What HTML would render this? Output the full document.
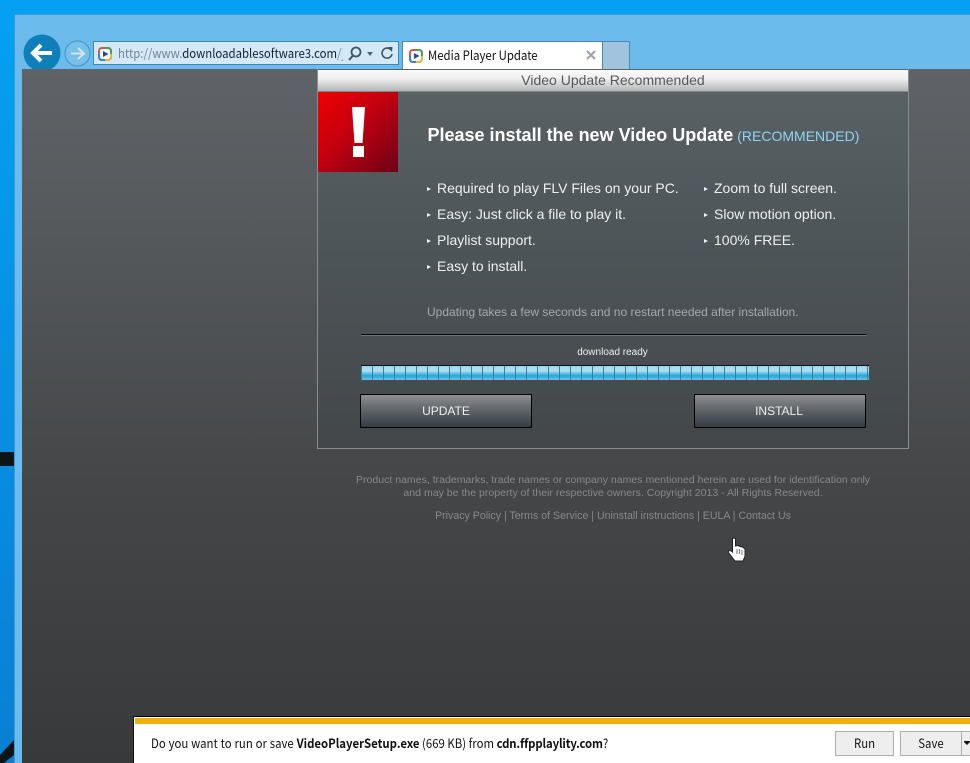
<!DOCTYPE html>
<html><head><meta charset="utf-8"><style>
html,body{margin:0;padding:0;width:970px;height:763px;overflow:hidden;background:#05a0f0}
body{position:relative;font-family:"Liberation Sans",sans-serif}
div{position:absolute;white-space:nowrap}
.ui{font-family:"Noto Sans CJK JP","Liberation Sans",sans-serif}
.sx{display:inline-block;transform:scaleX(.91);transform-origin:0 0}
.sc{display:inline-block;transform:scaleX(.91);transform-origin:50% 0}
.li{font-size:14px;color:#eef0f0;line-height:18px}
.li:before{content:"";display:inline-block;border-left:4px solid #eef;border-top:2.5px solid transparent;border-bottom:2.5px solid transparent;margin-right:6px;vertical-align:2px}
.btn{height:32px;border:1px solid #000;border-radius:1px;background:linear-gradient(#8c8e91,#5d6266 50%,#343c42);color:#eee;font-size:12px;line-height:32px;text-align:center}
</style></head><body>
<div style="left:0;top:0;width:970px;height:763px;background:linear-gradient(#04a1f2,#0a7fd2)"></div>
<div style="left:0;top:452px;width:14px;height:14px;background:#0b1518"></div>
<svg style="position:absolute;left:0;top:740px" width="14" height="23"><path d="M0 15L14 0V15L4 23H0Z" fill="#0b1518"/></svg>
<div style="left:14px;top:14px;width:956px;height:749px;background:#6bbcec;box-shadow:inset 1px 1px 0 #3a9ad8"></div>
<div style="left:22px;top:69px;width:948px;height:694px;background:linear-gradient(#5f6367,#55585b 25%,#444648 60%,#38393a)"></div>
<svg style="position:absolute;left:23px;top:34px" width="38" height="35"><circle cx="19" cy="19" r="18.500" fill="#0f7fb9"/><path d="M29 19H11M18 11L10 19L18 27" fill="none" stroke="#fff" stroke-width="4"/></svg>
<svg style="position:absolute;left:64px;top:40px" width="27" height="27"><circle cx="13.500" cy="13.500" r="12.500" fill="#78c0ea" stroke="#3f93c9"/><path d="M7 13.500H19M14 8L20 13.500L14 19" fill="none" stroke="#cfe6f5" stroke-width="2"/></svg>
<div style="left:93px;top:41px;width:304px;height:22px;background:#d3e9f8;border:1px solid #3d87b5"></div>
<svg style="position:absolute;left:97px;top:46px" width="16" height="16"><rect x="2" y="2" width="12" height="12" rx="3" fill="#f4f8fc" stroke="#d2574c" stroke-width="2"/><path d="M8 2h3a3 3 0 0 1 3 3v3" fill="none" stroke="#4b9e5b" stroke-width="2"/><path d="M14 8v3a3 3 0 0 1-3 3H8" fill="none" stroke="#e9b93f" stroke-width="2"/><path d="M2 8v3a3 3 0 0 0 3 3h3" fill="none" stroke="#3d7fd3" stroke-width="2"/><path d="M6 5L11.500 8L6 11Z" fill="#21518f"/></svg>
<div class="ui" style="left:118px;top:43px;width:225px;overflow:hidden;font-size:12.500px;line-height:19px;color:#75838d"><span class="sx">http://www.<span style="color:#15222c">downloadablesoftware3.com</span>/j</span></div>
<svg style="position:absolute;left:347px;top:46px" width="46" height="15"><circle cx="9" cy="6" r="4.500" fill="none" stroke="#3d5566" stroke-width="1.800"/><path d="M6 9.500L2 14" stroke="#3d5566" stroke-width="2"/><path d="M20 6H26L23 10Z" fill="#4d6475"/><path d="M44 4A5 5 0 1 0 45 8" fill="none" stroke="#3d5566" stroke-width="1.600"/><path d="M41 1L45.500 1L45 6Z" fill="#3d5566"/></svg>
<div style="left:402px;top:41px;width:199px;height:28px;background:#fff;border:0 solid #4a89b5;border-width:1px 1px 0"></div>
<svg style="position:absolute;left:408px;top:48px" width="16" height="16"><rect x="2" y="2" width="12" height="12" rx="3" fill="#f4f8fc" stroke="#d2574c" stroke-width="2"/><path d="M8 2h3a3 3 0 0 1 3 3v3" fill="none" stroke="#4b9e5b" stroke-width="2"/><path d="M14 8v3a3 3 0 0 1-3 3H8" fill="none" stroke="#e9b93f" stroke-width="2"/><path d="M2 8v3a3 3 0 0 0 3 3h3" fill="none" stroke="#3d7fd3" stroke-width="2"/><path d="M6 5L11.500 8L6 11Z" fill="#21518f"/></svg>
<div class="ui" style="left:428px;top:45px;font-size:12.500px;line-height:19px;color:#111"><span class="sx">Media Player Update</span></div>
<svg style="position:absolute;left:586px;top:50px" width="10" height="10"><path d="M1 1L9 9M9 1L1 9" stroke="#98a2a8" stroke-width="2"/></svg>
<div style="left:602px;top:41px;width:26px;height:27px;background:#a1c4de;border:1px solid #4a89b5;border-bottom:0"></div>

<div style="left:317px;top:69px;width:590px;height:379px;border:1px solid #8a8d8f;border-top:0;background:linear-gradient(#5b6367,#50585b 35%,#43474a)"></div>
<div style="left:318px;top:70px;width:590px;height:21px;background:linear-gradient(#fafafa,#f0f0f0 40%,#b4b5b6);border-bottom:1px solid #85888a;font-size:14px;line-height:21px;text-align:center;color:#55585b">Video Update Recommended</div>
<div style="left:318px;top:92px;width:80px;height:80px;background:linear-gradient(135deg,#ee0000,#c30010 45%,#6c0016)"></div>
<svg style="position:absolute;left:351px;top:106px" width="15" height="52"><path d="M1 1H14L11.500 37H3.500Z M2 40H13V51H2Z" fill="#fff"/></svg>
<div style="left:427.500px;top:124px;font-size:18px;line-height:22px;font-weight:bold;color:#fff">Please install the new Video Update <span style="font-weight:normal;font-size:14px;color:#8fd4f3;margin-left:-1px">(RECOMMENDED)</span></div>
<div class="li" style="left:427px;top:179px">Required to play FLV Files on your PC.</div>
<div class="li" style="left:427px;top:205px">Easy: Just click a file to play it.</div>
<div class="li" style="left:427px;top:231px">Playlist support.</div>
<div class="li" style="left:427px;top:257px">Easy to install.</div>
<div class="li" style="left:704px;top:179px">Zoom to full screen.</div>
<div class="li" style="left:704px;top:205px">Slow motion option.</div>
<div class="li" style="left:704px;top:231px">100% FREE.</div>
<div style="left:427px;top:304px;font-size:12px;line-height:16px;color:#a5a9ab">Updating takes a few seconds and no restart needed after installation.</div>
<div style="left:361px;top:334px;width:506px;height:1px;background:#060808;box-shadow:0 1px 0 #70757a"></div>
<div style="left:318px;top:347px;width:590px;font-size:10px;line-height:12px;text-align:center;color:#f0f0f0;text-indent:-1px">download ready</div>
<div style="left:361px;top:365px;width:508px;height:15px;box-sizing:border-box;border-top:1px solid #0d1010;background:repeating-linear-gradient(to right,#3f7f96 0 1px,transparent 1px 11px),linear-gradient(#9bd6ee,#b0e0f3 35%,#56bde4 55%,#25a5da 70%,#6fc6e7)"></div>
<div class="btn" style="left:360px;top:394px;width:170px">UPDATE</div>
<div class="btn" style="left:694px;top:394px;width:170px;text-indent:-2px">INSTALL</div>

<div style="left:318px;top:474px;width:590px;font-size:10.550px;line-height:12.500px;text-align:center;color:#86898b">Product names, trademarks, trade names or company names mentioned herein are used for identification only<br>and may be the property of their respective owners. Copyright 2013 - All Rights Reserved.</div>
<div style="left:318px;top:510px;width:590px;font-size:10.600px;line-height:13px;text-align:center;color:#86898b">Privacy Policy | Terms of Service | Uninstall instructions | EULA | Contact Us</div>
<svg style="position:absolute;left:726.500px;top:537px" width="20" height="26"><path d="M5.500 2C5.500 .8 8.500 .8 8.500 2V9L11 8.500L13 9.500L15.500 10L18 12V19L16 24H8L1.500 15.500C.5 14 3 12.500 5.500 15Z" fill="#fff" stroke="#222" stroke-width="1"/><path d="M10 12v5M12.500 12v5M15 13v5" stroke="#777"/></svg>

<div style="left:134px;top:716px;width:836px;height:47px;background:#fff;border-top:1px solid #050505;box-shadow:-1px 0 0 #111;box-sizing:border-box"></div>
<div style="left:135px;top:718px;width:835px;height:6px;background:#efb00f"></div>
<div class="ui" style="left:151px;top:733px;font-size:12.500px;line-height:19px;color:#111"><span class="sx"><span style="word-spacing:.35px">Do you want to run or save </span><b>VideoPlayerSetup.exe</b> (669 KB) from <b style="letter-spacing:-.15px">cdn.ffpplaylity.com</b>?</span></div>
<div class="ui" style="left:835px;top:731px;width:57px;height:23px;border:1px solid #adadad;background:#eeeeee;text-align:center;font-size:12.500px;line-height:22px;color:#111"><span class="sc">Run</span></div>
<div class="ui" style="left:900px;top:731px;width:60px;height:23px;border:1px solid #adadad;background:#eeeeee;text-align:center;font-size:12.500px;line-height:22px;color:#111"><span class="sc">Save</span></div>
<div style="left:961px;top:731px;width:9px;height:23px;border:1px solid #adadad;border-right:0;background:#eeeeee"></div>
<svg style="position:absolute;left:964px;top:741px" width="6" height="4"><path d="M0 0H6V1L3 4L0 1Z" fill="#111"/></svg>
</body></html>
